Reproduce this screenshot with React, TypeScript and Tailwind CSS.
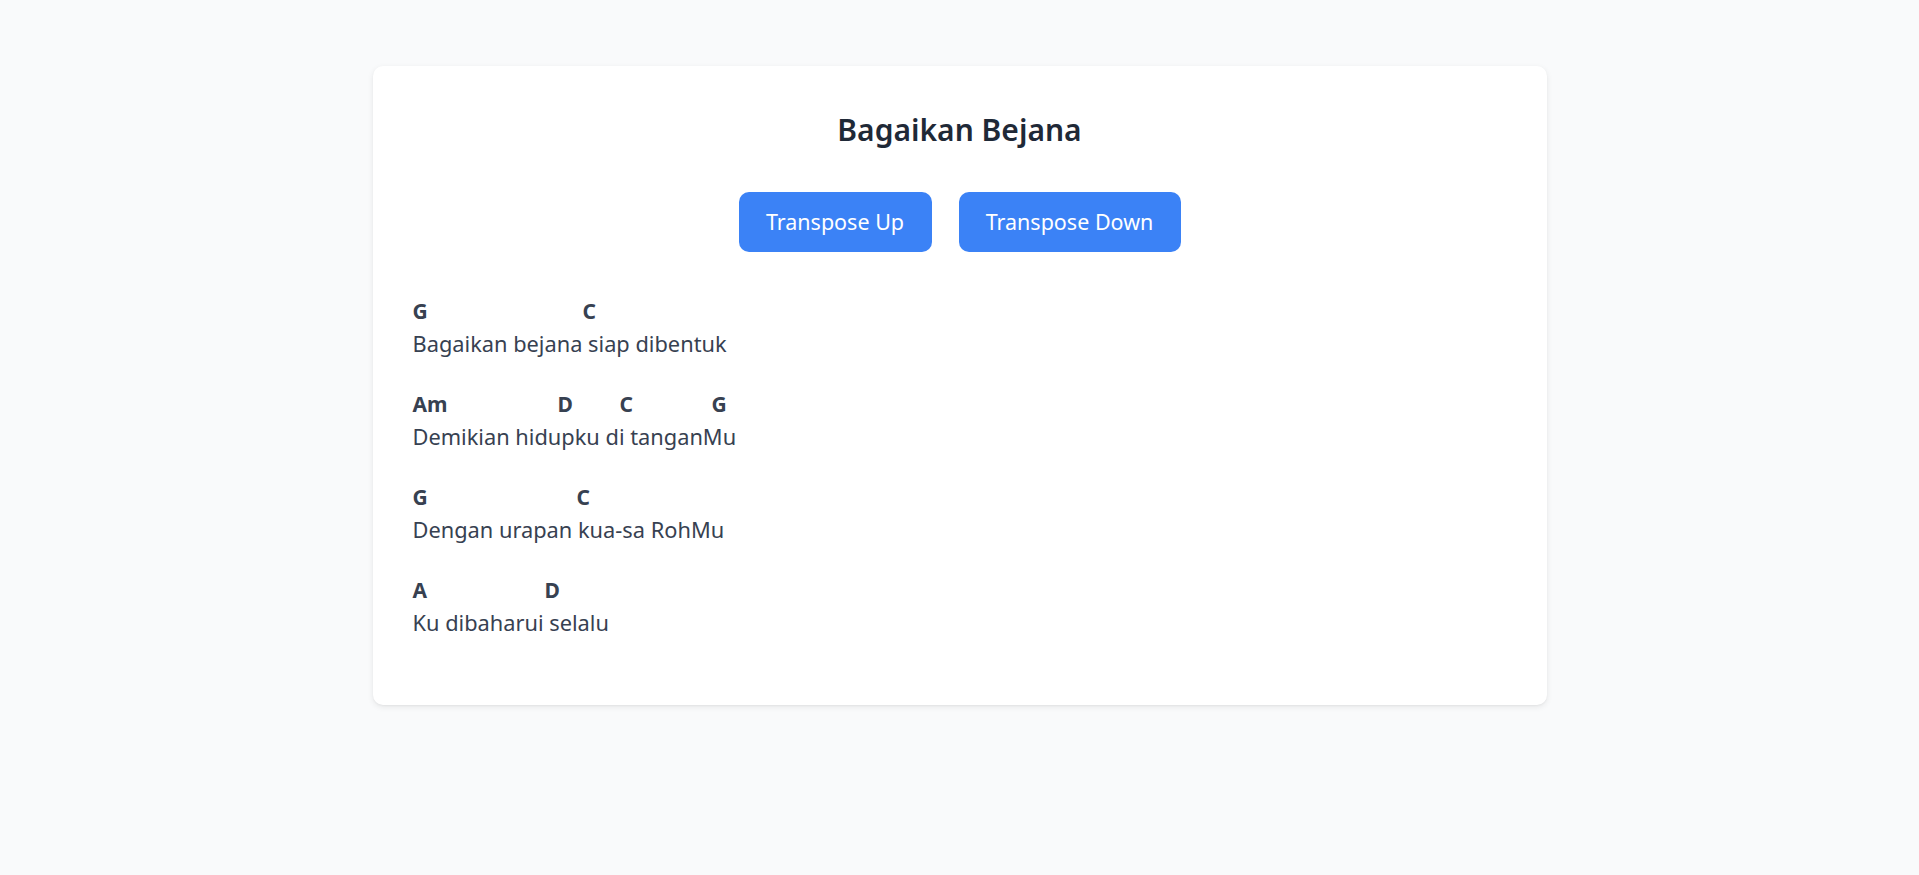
import React, { useState } from 'react';

interface SongLine {
    chords: { name: string; width: number }[];
    lyric: string;
}

// chord widths are the pixel distance to the next chord, so they sit over the right syllable
const song: SongLine[] = [
    {
        chords: [
            { name: 'G', width: 170 },
            { name: 'C', width: 0 },
        ],
        lyric: 'Bagaikan bejana siap dibentuk',
    },
    {
        chords: [
            { name: 'Am', width: 145 },
            { name: 'D', width: 62 },
            { name: 'C', width: 92 },
            { name: 'G', width: 0 },
        ],
        lyric: 'Demikian hidupku di tanganMu',
    },
    {
        chords: [
            { name: 'G', width: 164 },
            { name: 'C', width: 0 },
        ],
        lyric: 'Dengan urapan kua-sa RohMu',
    },
    {
        chords: [
            { name: 'A', width: 132 },
            { name: 'D', width: 0 },
        ],
        lyric: 'Ku dibaharui selalu',
    },
];

const NOTES = ['C', 'C#', 'D', 'D#', 'E', 'F', 'F#', 'G', 'G#', 'A', 'A#', 'B'];

const shiftChord = (chord: string, step: number) => {
    const match = chord.match(/^([A-G]#?)(.*)$/);
    if (!match) return chord;
    const idx = NOTES.indexOf(match[1]);
    if (idx < 0) return chord;
    return NOTES[(idx + step + 12) % 12] + match[2];
};

const App = () => {
    const [offset, setOffset] = useState(0);

    return (
        <div className="min-h-screen bg-[#f9fafb] pt-[66px] pb-16 font-['Noto_Sans',sans-serif]">
            <div className="mx-auto w-[1174px] rounded-[10px] bg-white p-[40px] pb-[37px] shadow-[0_2px_6px_rgba(0,0,0,0.08),0_1px_2px_rgba(0,0,0,0.04)]">
                {/* Title */}
                <h1 className="mt-[4px] text-center text-[30px] leading-[40px] font-semibold text-[#1f2937]">Bagaikan Bejana</h1>

                {/* Transpose buttons */}
                <div className="mt-[42px] flex justify-center gap-[27px]">
                    <button
                        onClick={() => setOffset(offset + 1)}
                        className="h-[60px] w-[193px] rounded-[10px] bg-[#3b82f6] text-[21.5px] text-white"
                    >
                        Transpose Up
                    </button>
                    <button
                        onClick={() => setOffset(offset - 1)}
                        className="h-[60px] w-[222px] rounded-[10px] bg-[#3b82f6] text-[21.5px] text-white"
                    >
                        Transpose Down
                    </button>
                </div>

                {/* Chords and lyrics */}
                <div className="mt-[44px] text-[#374151]">
                    {song.map((line, i) => (
                        <div key={i} className="mb-[29px]">
                            <div className="flex h-[32px] items-center text-[21px] font-bold">
                                {line.chords.map((c, j) => (
                                    <span key={j} style={c.width ? { width: c.width } : undefined} className="shrink-0">
                                        {shiftChord(c.name, offset)}
                                    </span>
                                ))}
                            </div>
                            <div className="h-[32px] text-[21.8px] leading-[32px]">{line.lyric}</div>
                        </div>
                    ))}
                </div>
            </div>
        </div>
    );
};

export default App;
